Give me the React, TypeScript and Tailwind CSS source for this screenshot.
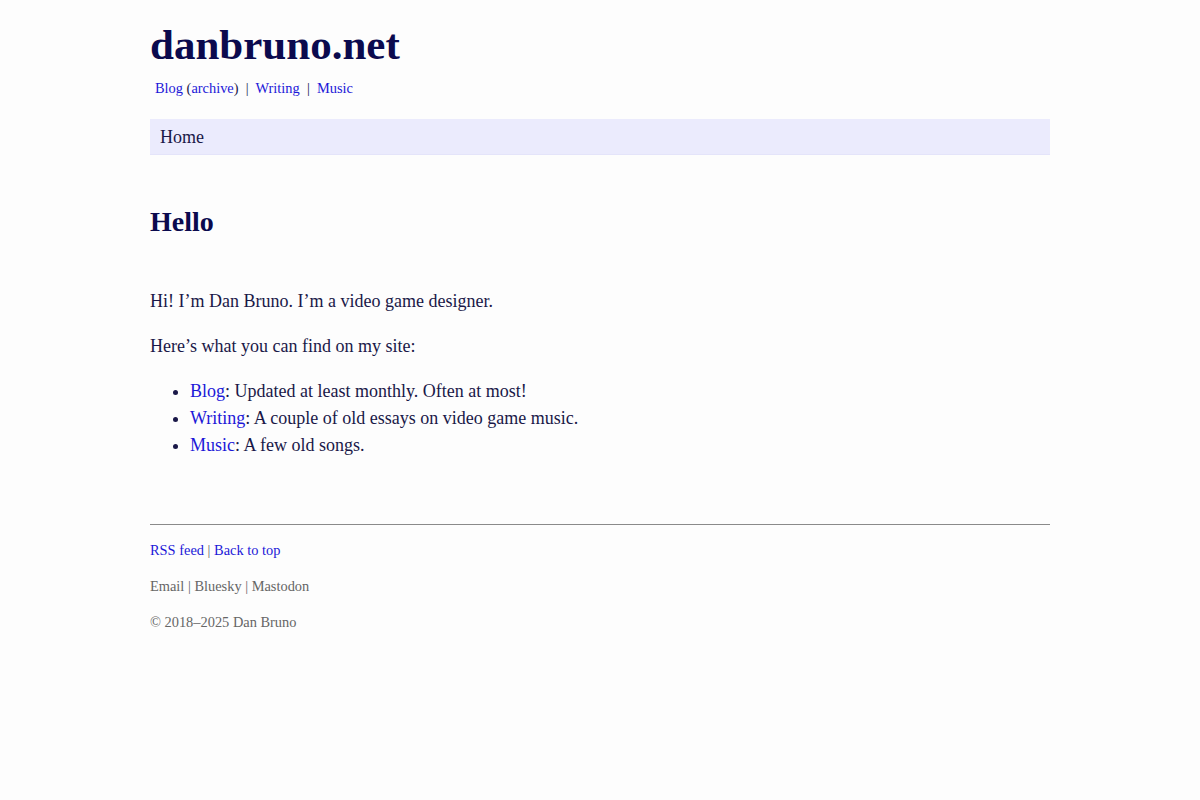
const serif = { fontFamily: '"Liberation Serif", "Times New Roman", serif' };

function NavLink({ children }: { children: React.ReactNode }) {
  return <a href="#" className="text-[#1c18d8] no-underline">{children}</a>;
}

export default function App() {
  return (
    <div className="min-h-[800px] bg-[#fdfdfd] text-[#1a1848]" style={serif}>
      <div className="mx-auto w-[900px] pt-5">
        <header>
          <h1 className="text-[43px] font-bold leading-[50px] text-[#0b0a4e]">danbruno.net</h1>
          <nav className="mt-[7px] pl-[5px] text-[14.4px] leading-[22px] text-[#1a1848]">
            <NavLink>Blog</NavLink> (<NavLink>archive</NavLink>)&nbsp; |&nbsp; <NavLink>Writing</NavLink>&nbsp; |&nbsp; <NavLink>Music</NavLink>
          </nav>
          <div className="mt-5 h-9 border-b border-[#e4e4fa] bg-[#ebebfd] px-[10px] pt-px text-[18px] leading-[35px] text-[#1a1848]">
            Home
          </div>
        </header>

        <main>
          <h2 className="mt-[50px] text-[28px] font-bold leading-[34px] text-[#0b0a4e]">Hello</h2>
          <div className="mt-[49px] text-[18px] leading-[27px]">
            <p>Hi! I’m Dan Bruno. I’m a video game designer.</p>
            <p className="mt-[18px]">Here’s what you can find on my site:</p>
            <ul className="mt-[18px] list-disc pl-10">
              <li><NavLink>Blog</NavLink>: Updated at least monthly. Often at most!</li>
              <li><NavLink>Writing</NavLink>: A couple of old essays on video game music.</li>
              <li><NavLink>Music</NavLink>: A few old songs.</li>
            </ul>
          </div>
        </main>

        <footer className="mt-[65px] border-t border-[#8a8a8a] pt-[14px] text-[14.4px] leading-[22px] text-[#666666]">
          <p>
            <NavLink>RSS feed</NavLink> | <NavLink>Back to top</NavLink>
          </p>
          <p className="mt-[14px]">Email | Bluesky | Mastodon</p>
          <p className="mt-[14px]">© 2018–2025 Dan Bruno</p>
        </footer>
      </div>
    </div>
  );
}
